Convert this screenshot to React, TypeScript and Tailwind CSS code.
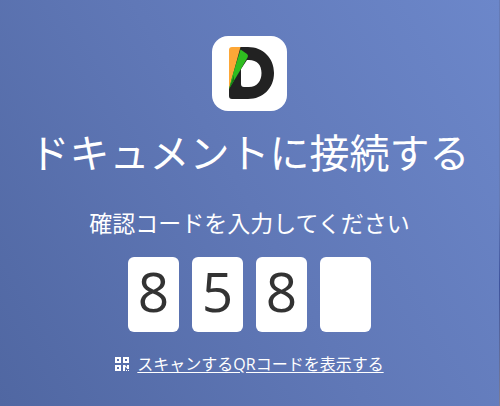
import { useState } from "react";

const codeDigits = ["8", "5", "8", ""];

function DocumentsLogo() {
  return (
    <svg viewBox="0 0 75 75" className="size-[75px]" role="img" aria-label="Documents">
      <rect width="75" height="75" rx="16" fill="#ffffff" />
      <path
        fillRule="evenodd"
        fill="#222222"
        d="M27 11h9c15 0 26 11 26 26S51 63 36 63H20c-2 0-3-1-3-3v-8ZM29 33v15c0 2 1 3 3 3h5c8 0 12.500-6 12.500-14s-4.500-13-12.500-13h-2Z"
      />
      <path fill="#fda737" d="M20 11h8.500L17 53V14c0-2 1-3 3-3Z" />
      <path fill="#2fbd20" d="M28.500 13.500 35 18c1 .8 1.200 2 .5 3.500L29 33 17 53l3-12Z" />
      <path fill="#167b17" d="M22 39 17 53l5-8.500Z" />
    </svg>
  );
}

function QrIcon() {
  return (
    <svg viewBox="0 0 14 14" className="size-3.5 shrink-0" fill="#ffffff" aria-hidden="true">
      <path
        fillRule="evenodd"
        d="M0 0h6v6H0ZM2 2v2h2V2ZM8 0h6v6H8ZM10 2v2h2V2ZM0 8h6v6H0ZM2 10v2h2v-2Z"
      />
      <path d="M8 8h2l2 2V8h2v4h-2v-1l-2-1v4H8ZM11 13h1v1h-1ZM13 13h1v1h-1Z" />
    </svg>
  );
}

export default function App() {
  const [digits, setDigits] = useState(codeDigits);

  return (
    <div className="flex min-h-screen bg-linear-[60deg] from-[#5067a2] via-[#6078b7] to-[#6c87ca] font-['Open_Sans','Noto_Sans_CJK_JP',sans-serif] text-white">
      <main className="flex flex-1 flex-col items-center pt-9">
        <DocumentsLogo />
        <h1 className="mt-3 text-[40px] leading-[60px] whitespace-nowrap">
          ドキュメントに接続する
        </h1>
        <p id="code-label" className="mt-6 text-[23px] leading-8 whitespace-nowrap">
          確認コードを入力してください
        </p>
        <div role="group" aria-labelledby="code-label" className="mt-[18px] flex gap-[13px]">
          {digits.map((digit, index) => (
            <input
              key={index}
              aria-label={`${index + 1}`}
              inputMode="numeric"
              maxLength={1}
              value={digit}
              onChange={(event) =>
                setDigits(digits.map((old, i) => (i === index ? event.target.value : old)))
              }
              className="h-[75px] w-[51px] rounded-md bg-white pb-1.5 text-center text-[55px] text-[#333333] outline-none"
            />
          ))}
        </div>
        <div className="mt-5 flex items-center gap-2 pb-7">
          <QrIcon />
          <a
            href="#qr"
            className="text-base leading-6 whitespace-nowrap underline underline-offset-2"
          >
            スキャンするQRコードを表示する
          </a>
        </div>
      </main>
      <div className="w-px bg-linear-to-b from-[#667bb5] from-50% via-[#3e539c] via-70% to-[#7d7d96]" />
    </div>
  );
}
